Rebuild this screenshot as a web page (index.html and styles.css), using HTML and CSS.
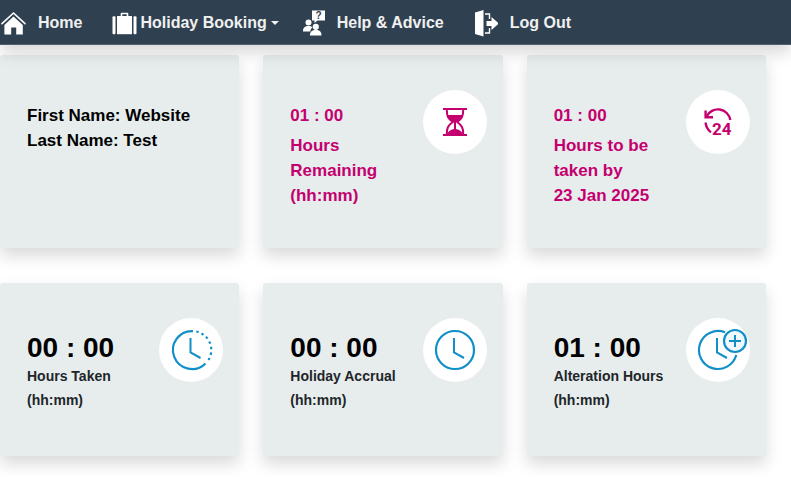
FILE: index.html
```
<!DOCTYPE html>
<html lang="en">
<head>
    <meta charset="UTF-8">
    <meta name="viewport" content="width=device-width, initial-scale=1">
    <title>Holiday Booking</title>
    <link rel="stylesheet" href="styles.css">
</head>
<body>
    <nav class="navbar">
        <a class="nav-link" href="#home">
            <svg width="26" height="26" viewBox="0 0 26 26" fill="#fff" aria-hidden="true">
                <path d="M2 13.6 13.5 3 25 13.6" fill="none" stroke="#fff" stroke-width="1.6" stroke-linecap="round"/>
                <path d="M13.5 6.6 22.8 15v9.6h-6.6v-7h-5v7H4.4V15z"/>
            </svg>
            Home
        </a>
        <button class="nav-link nav-dropdown" type="button" aria-haspopup="true">
            <svg width="32" height="26" viewBox="0 0 32 26" fill="#fff" aria-hidden="true">
                <rect x="6.5" y="6.2" width="3" height="18" rx="1"/>
                <rect x="11" y="6" width="15" height="18.2"/>
                <rect x="27.5" y="6.2" width="3" height="18" rx="1"/>
                <path d="M15.500 6V3.500h6V6" fill="none" stroke="#fff" stroke-width="1.6" stroke-linejoin="round"/>
            </svg>
            Holiday Booking
            <span class="caret"></span>
        </button>
        <a class="nav-link" href="#help">
            <svg width="22" height="28" viewBox="0 0 22 28" fill="#fff" aria-hidden="true">
                <path d="M9 1.500h13v10h-7.5L11.500 14v-2.500H9z"/>
                <text class="question" x="15.500" y="10" text-anchor="middle">?</text>
                <circle cx="5.500" cy="13.500" r="3"/>
                <path d="M0 22.500c0-4 2-5.500 5.500-5.500 2 0 3 .4 4 1.500-1.600 1-2 2.200-2.200 4z"/>
                <circle cx="12.800" cy="17.800" r="3.100"/>
                <path d="M7 26.500c0-4 2-5.500 5.800-5.500s5.700 1.500 5.700 5.500z"/>
            </svg>
            Help &amp; Advice
        </a>
        <a class="nav-link" href="#logout">
            <svg width="30" height="28" viewBox="0 0 30 28" fill="#fff" aria-hidden="true">
                <path d="M7 3.500 15.500 1v26.500L7 25z"/>
                <path d="M17 5h4.500v5M17 24h4.500v-5" fill="none" stroke="#fff" stroke-width="1.400"/>
                <path d="M18.500 12h5V8l7.500 6.500-7.500 6.500v-4h-5z"/>
            </svg>
            Log Out
        </a>
    </nav>

    <main class="cards">
        <section class="card">
            <div class="card-text name">
                First Name: Website<br>
                Last Name: Test
            </div>
        </section>

        <section class="card highlight">
            <div class="card-text">
                <div class="value">01 : 00</div>
                <div class="label">Hours Remaining (hh:mm)</div>
            </div>
            <div class="card-icon">
                <svg width="64" height="64" viewBox="0 0 64 64" fill="currentColor" aria-hidden="true">
                    <rect x="20" y="18" width="24" height="2"/>
                    <rect x="20" y="44" width="24" height="2"/>
                    <path d="M23.800 20c0 6 1.200 8.500 6 12-4.800 3.500-6 6-6 12M40.200 20c0 6-1.200 8.500-6 12 4.800 3.500 6 6 6 12" fill="none" stroke="currentColor" stroke-width="2"/>
                    <path d="M24 25h16c-.8 3-2.500 4.800-5.500 7h-5C26.500 29.800 24.800 28 24 25z"/>
                    <path d="M31 31h2v8c3.800.8 6.300 2.500 6.800 5.500H24.200c.5-3 3-4.700 6.800-5.500z"/>
                </svg>
            </div>
        </section>

        <section class="card highlight">
            <div class="card-text">
                <div class="value">01 : 00</div>
                <div class="label">Hours to be taken by <br>23 Jan 2025</div>
            </div>
            <div class="card-icon">
                <svg width="64" height="64" viewBox="0 0 64 64" fill="none" stroke="currentColor" stroke-width="2.400" aria-hidden="true">
                    <path d="M20.500 26.500A12.600 12.600 0 0 1 44.300 30"/>
                    <path d="M19.600 20.500v6.800h7.400"/>
                    <path d="M19.600 32.500a13 13 0 0 0 5.400 9.700"/>
                    <text class="hours24" x="26" y="45">24</text>
                </svg>
            </div>
        </section>

        <section class="card totals">
            <div class="card-text">
                <div class="value">00 : 00</div>
                <div class="label">Hours Taken (hh:mm)</div>
            </div>
            <div class="card-icon">
                <svg width="64" height="64" viewBox="0 0 64 64" fill="none" stroke="currentColor" stroke-width="2.200" aria-hidden="true">
                    <path d="M34 13.100A19 19 0 1 0 46.500 45.400"/>
                    <path d="M37.300 13.500A19 19 0 0 1 49.500 42" stroke-dasharray="2.400 3.200"/>
                    <path d="M31.500 20v14.500l10 5.500" stroke-width="2"/>
                </svg>
            </div>
        </section>

        <section class="card totals">
            <div class="card-text">
                <div class="value">00 : 00</div>
                <div class="label">Holiday Accrual (hh:mm)</div>
            </div>
            <div class="card-icon">
                <svg width="64" height="64" viewBox="0 0 64 64" fill="none" stroke="currentColor" stroke-width="2.200" aria-hidden="true">
                    <circle cx="32" cy="32" r="19"/>
                    <path d="M31 20v14.500l10 5.500" stroke-width="2"/>
                </svg>
            </div>
        </section>

        <section class="card totals">
            <div class="card-text">
                <div class="value">01 : 00</div>
                <div class="label">Alteration Hours (hh:mm)</div>
            </div>
            <div class="card-icon">
                <svg width="64" height="64" viewBox="0 0 64 64" fill="none" stroke="currentColor" stroke-width="2.200" aria-hidden="true">
                    <path d="M39 14.300A19 19 0 1 0 50.300 37"/>
                    <path d="M31 20v14.500l10 5.500" stroke-width="2"/>
                    <circle cx="49" cy="23" r="11" fill="#f1f9fd"/>
                    <path d="M49 17v12M43 23h12" stroke-width="2"/>
                </svg>
            </div>
        </section>
    </main>
</body>
</html>
```

FILE: styles.css
```
* {
    box-sizing: border-box;
}
body {
    margin: 0;
    background: #fff;
    color: #212529;
    font-family: Arial, "Liberation Sans", sans-serif;
    font-weight: bold;
}

/* top menu */
.navbar {
    position: relative;
    z-index: 1;
    display: flex;
    align-items: center;
    gap: 24px;
    height: 45px;
    padding-top: 1px;
    background: #2f4050;
    border-bottom: 1px solid #52606d;
    box-shadow: 0 8px 16px rgba(0, 0, 0, 0.15);
}
.nav-link {
    display: flex;
    align-items: center;
    gap: 12px;
    padding: 0;
    border: 0;
    background: none;
    color: #f0f0f0;
    font: bold 16px Arial, "Liberation Sans", sans-serif;
    text-decoration: none;
    white-space: nowrap;
    cursor: pointer;
}
.nav-dropdown {
    gap: 2px;
}
.caret {
    margin-left: 2px;
    border-top: 4px solid #f0f0f0;
    border-left: 4px solid transparent;
    border-right: 4px solid transparent;
}
.question {
    fill: #2f4050;
    font-size: 10px;
}

/* dashboard cards */
.cards {
    display: grid;
    grid-template-columns: repeat(3, 1fr);
    gap: 35px 24px;
    padding: 10px 25px 20px 0;
}
.card {
    display: flex;
    min-height: 173px;
    padding: 35px 16px 25px 27px;
    background: #e7eded;
    border-radius: 3px;
    box-shadow: 0 8px 16px rgba(0, 0, 0, 0.15);
}
.card-text {
    flex: 1;
    padding: 13px 0 15px;
}
.name {
    color: #000;
    font-size: 17px;
    line-height: 25px;
}
.card-icon {
    flex: none;
    width: 64px;
    height: 64px;
    border-radius: 50%;
    background: #fff;
}
.card-icon svg {
    display: block;
    overflow: visible;
}
.highlight {
    color: #c4006f;
    font-size: 17px;
}
.highlight .value {
    margin-bottom: 5px;
    line-height: 25px;
}
.highlight .label {
    line-height: 25px;
}
.hours24 {
    fill: currentColor;
    stroke: none;
    font: bold 17px Roboto, sans-serif;
}
.totals .value {
    color: #000;
    font-size: 28px;
    line-height: 33px;
}
.totals .label {
    font-size: 14px;
    line-height: 24px;
}
.totals .card-icon {
    color: #118fc9;
}
```
